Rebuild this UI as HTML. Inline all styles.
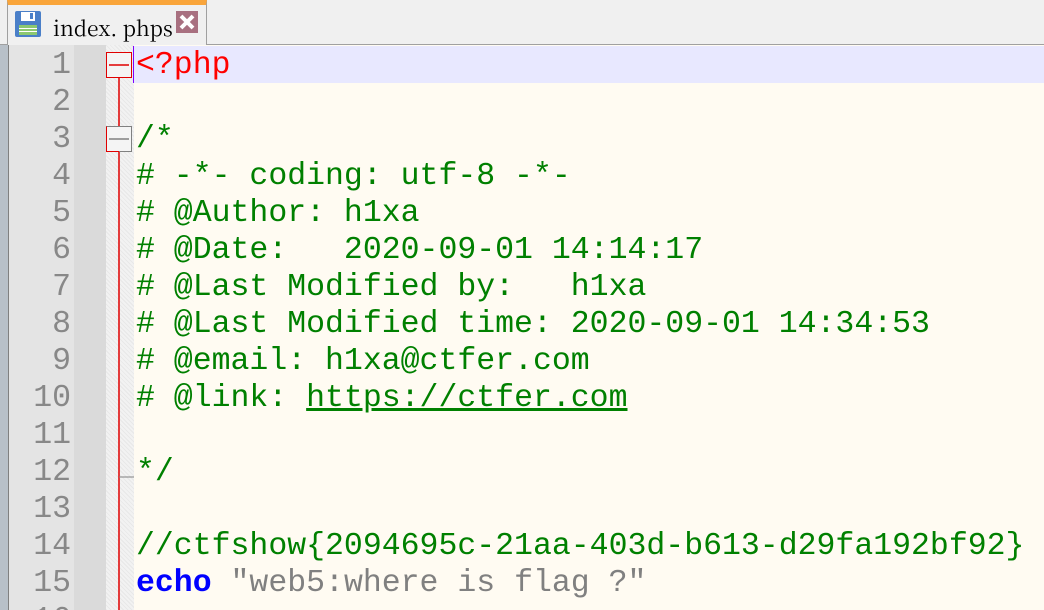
<!DOCTYPE html>
<html style="overflow:hidden;height:610px"><head><style>
body{margin:0;width:1044px;height:610px;overflow:hidden;background:#f0f0f0;position:relative;font-family:"Liberation Mono",monospace}
.tabbar{position:absolute;left:0;top:0;width:1044px;height:44px;background:#f0f0f0;border-bottom:1px solid #a0a0a0}
.tab{position:absolute;left:7px;top:0;width:200px;height:45px;background:#f0f0f0;border-right:1px solid #a0a0a0;border-left:1px solid #a0a0a0;border-top:5px solid #f9a53b;box-sizing:border-box}
.tab .t{position:absolute;left:45px;top:8px;font-family:"Noto Serif CJK SC","Liberation Serif",serif;font-size:21px;color:#000}
.left{position:absolute;left:0;top:45px;width:8px;height:565px;background:#b8c0c8;border-right:1px solid #808080}
.nums{position:absolute;left:9px;top:45px;width:65px;height:565px;background:#e4e4e4}
.nums2{position:absolute;left:74px;top:45px;width:32px;height:565px;background:#dadada}
.fold{position:absolute;left:106px;top:45px;width:28px;height:565px;background:#f2f2f2;background-image:repeating-linear-gradient(45deg,#e8e8e8 0 1px,transparent 1px 3px)}
.ed{position:absolute;left:134px;top:45px;width:910px;height:565px;background:#fffbf2}
.hl{position:absolute;left:134px;top:46px;width:910px;height:37px;background:#e8e8ff}
.row{position:absolute;height:37px;line-height:37px;font-size:31.5px;white-space:pre;top:0}
.n{left:9px;width:62px;text-align:right;color:#888}
.c{left:136px;color:#008000}
.u{text-decoration:underline}
.clip{position:absolute;left:0;top:0;width:1044px;height:610px;overflow:hidden}
</style></head><body><div class="clip">
<div class="tabbar"></div>
<div class="tab">
<svg style="position:absolute;left:6px;top:5px" width="28" height="28" viewBox="0 0 28 28"><rect x="1" y="1" width="26" height="26" rx="2" fill="#4a7fc8"/><rect x="7" y="2" width="14" height="9" fill="#fff"/><rect x="16" y="3" width="3" height="6" fill="#4a7fc8"/><rect x="5" y="15" width="18" height="10" fill="#8cc870"/><rect x="5" y="18" width="18" height="1" fill="#fff"/><rect x="5" y="21" width="18" height="1" fill="#fff"/></svg>
<div class="t">index. phps</div>
<svg style="position:absolute;left:168px;top:6px" width="22" height="22"><rect width="22" height="22" fill="#a87080"/><path d="M5 5L17 17M17 5L5 17" stroke="#fff" stroke-width="4"/></svg>
</div>
<div class="left"></div><div class="nums"></div><div class="nums2"></div><div class="fold"></div><div class="ed"></div><div class="hl"></div>
<div style="position:absolute;left:133px;top:46px;width:1px;height:37px;background:#8000ff"></div>
<svg style="position:absolute;left:106px;top:45px" width="28" height="565">
<line x1="13" y1="32" x2="13" y2="565" stroke="#e00000" stroke-width="1.5"/>
<rect x="0.5" y="7.5" width="25" height="25" fill="#f4f4f4" stroke="#e00000"/><line x1="3" y1="20" x2="23" y2="20" stroke="#e00000" stroke-width="1.5"/>
<rect x="0.5" y="81.5" width="25" height="25" fill="#f4f4f4" stroke="#808080"/><path d="M0.5 81.5V106.5H13" fill="none" stroke="#e00000"/><line x1="3" y1="94" x2="23" y2="94" stroke="#808080" stroke-width="1.5"/>
<line x1="13" y1="432" x2="28" y2="432" stroke="#808080"/>
</svg>
<div class="row n" style="top:47px">1</div>
<div class="row n" style="top:84px">2</div>
<div class="row n" style="top:121px">3</div>
<div class="row n" style="top:158px">4</div>
<div class="row n" style="top:195px">5</div>
<div class="row n" style="top:232px">6</div>
<div class="row n" style="top:269px">7</div>
<div class="row n" style="top:306px">8</div>
<div class="row n" style="top:343px">9</div>
<div class="row n" style="top:380px">10</div>
<div class="row n" style="top:417px">11</div>
<div class="row n" style="top:454px">12</div>
<div class="row n" style="top:491px">13</div>
<div class="row n" style="top:528px">14</div>
<div class="row n" style="top:565px">15</div>
<div class="row n" style="top:602px">16</div>
<div class="row c" style="top:47px;color:#ff0000">&lt;?php</div>
<div class="row c" style="top:121px">/*</div>
<div class="row c" style="top:158px"># -*- coding: utf-8 -*-</div>
<div class="row c" style="top:195px"># @Author: h1xa</div>
<div class="row c" style="top:232px"># @Date:   2020-09-01 14:14:17</div>
<div class="row c" style="top:269px"># @Last Modified by:   h1xa</div>
<div class="row c" style="top:306px"># @Last Modified time: 2020-09-01 14:34:53</div>
<div class="row c" style="top:343px"># @email: h1xa@ctfer.com</div>
<div class="row c" style="top:380px"># @link: <span class="u">https://ctfer.com</span></div>
<div class="row c" style="top:454px">*/</div>
<div class="row c" style="top:528px">//ctfshow{2094695c-21aa-403d-b613-d29fa192bf92}</div>
<div class="row c" style="top:565px"><b style="color:#0000ff">echo</b> <span style="color:#808080">"web5:where is flag ?"</span></div>
</div></body></html>
